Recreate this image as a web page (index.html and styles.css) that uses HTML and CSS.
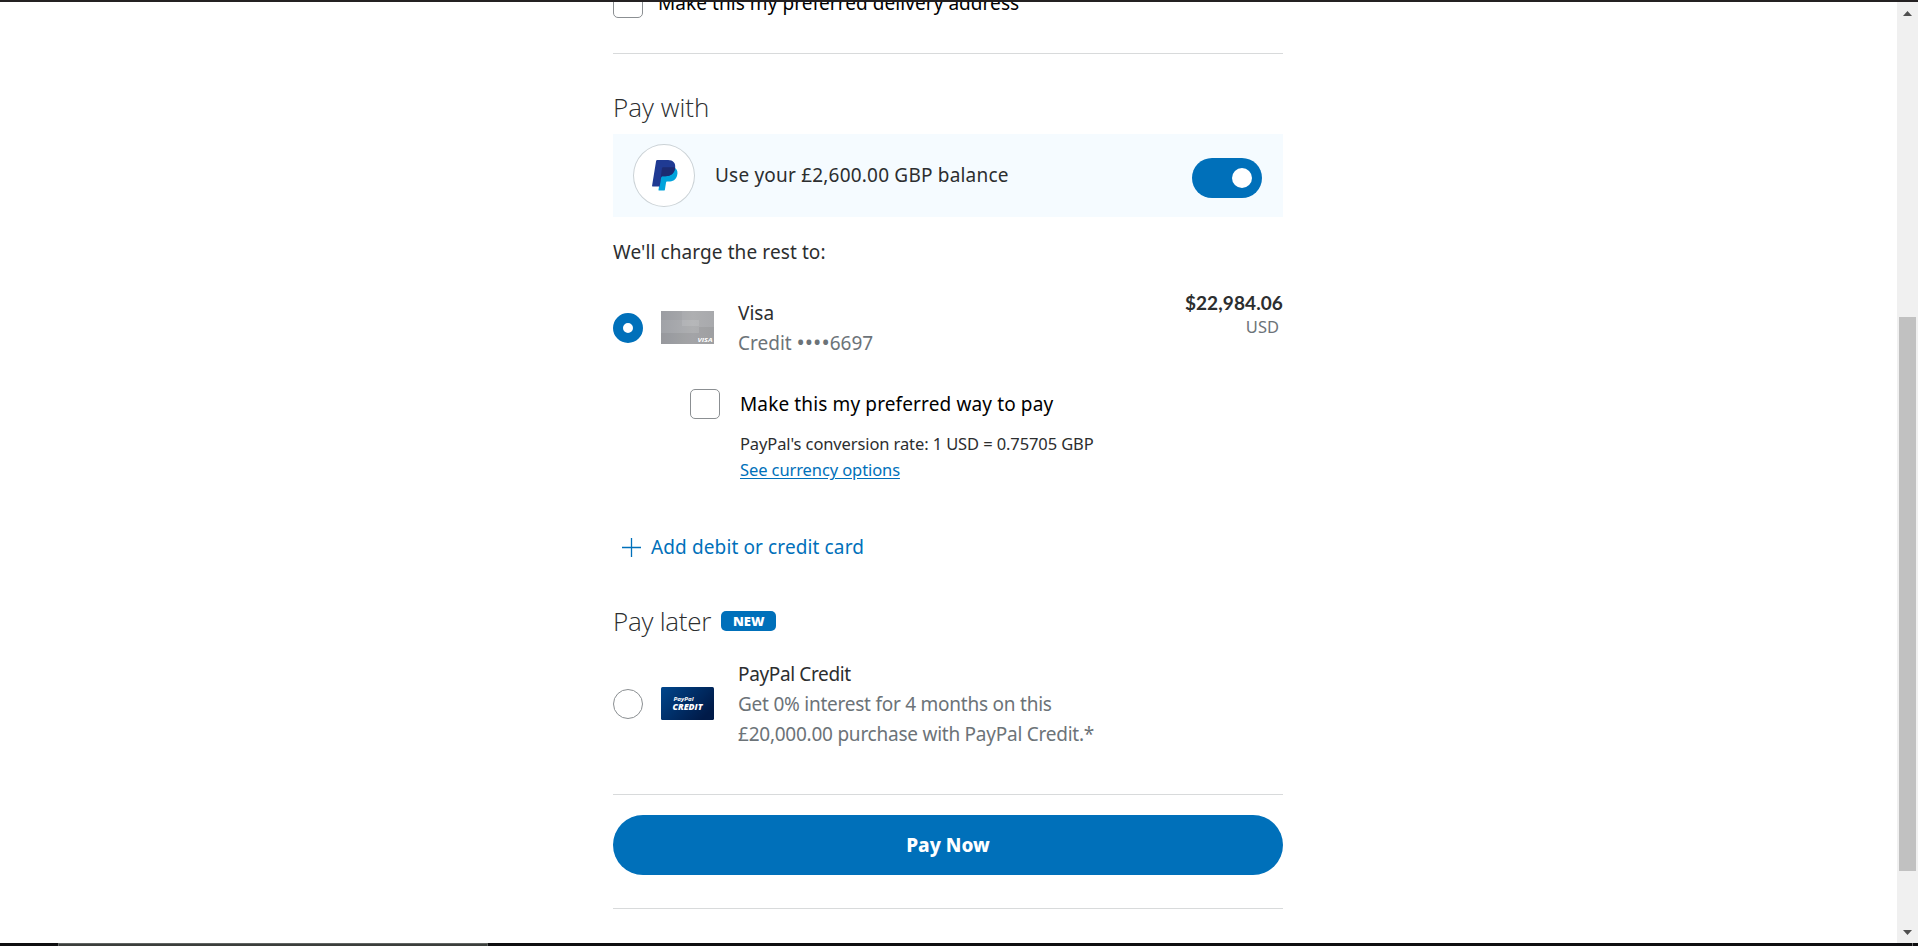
FILE: index.html
```html
<!DOCTYPE html>
<html lang="en">
<head>
<meta charset="utf-8">
<title>Pay with PayPal</title>
<link rel="stylesheet" href="styles.css">
</head>
<body>
<div class="frame-top"></div>
<div class="viewport">
  <main class="content">
    <div class="column">
      <label class="address-row"><span class="checkbox"></span><span class="t-address">Make this my preferred delivery address</span></label>
      <hr class="rule rule-first">
      <h2 class="heading heading-with"><span class="t-with">Pay with</span></h2>
      <section class="balance">
        <span class="balance-logo">
          <svg width="26" height="31" viewBox="0 0 26 31"><path fill="#00a3dc" d="M23.4 8.2c2.2 1.7 2.5 4.200 1.700 7.400-1.100 4.400-4.200 6-8.600 6h-1.200c-.7 0-1.200.4-1.300 1.100l-1.100 7c-.1.600-.5.900-1.100.9H7.300c-.6 0-.9-.3-.8-.9L10 8.200z"/><path fill="#1f3a93" d="M5.400 0h10.700c4.900 0 7.900 3.200 7 8-1 5.600-4.500 8.200-9.700 8.200h-2.600c-.9 0-1.500.5-1.700 1.400l-1.400 9H.9c-.6 0-.9-.4-.8-1L4.100 1.100C4.200.4 4.700 0 5.400 0z"/><path fill="#1c2b72" d="M11 7.200h11c.5 0 .9.200 1.300.5-.9 5.700-4.500 8.500-9.900 8.500h-2.600c-.9 0-1.500.5-1.700 1.300L7.900 24 10 8.100c.1-.6.400-.9 1-.9z"/></svg>
        </span>
        <span class="balance-text t-balance">Use your £2,600.00 GBP balance</span>
        <span class="toggle"><span class="knob"></span></span>
      </section>
      <p class="rest"><span class="t-rest">We'll charge the rest to:</span></p>
      <section class="option visa">
        <span class="radio selected"></span>
        <svg class="card" width="53" height="33" viewBox="0 0 53 33">
          <defs><linearGradient id="silver" x1="0" y1="0" x2="1" y2="0"><stop offset="0" stop-color="#9b9da2"/><stop offset=".6" stop-color="#a9aaad"/><stop offset="1" stop-color="#a3a4a7"/></linearGradient></defs>
          <path fill="url(#silver)" d="M0 0h53v33H0z"/><path fill="#fff" fill-opacity=".06" d="M21 0h32v16H21zM0 9h38v13H0z"/><path fill="#fff" fill-opacity=".1" d="M21 9h17v6H21z"/><path fill="#777" fill-opacity=".1" d="M0 22h53v11H0zM38 16h15v6H38z"/>
          <text class="visa-mark" x="36.500" y="31" textLength="15" lengthAdjust="spacingAndGlyphs">VISA</text>
        </svg>
        <div class="info"><div><span class="t-visa">Visa</span></div><div class="muted"><span class="t-num">Credit <span class="dots">••••</span>6697</span></div></div>
        <div class="amount"><div class="total"><span class="t-total">$22,984.06</span></div><div class="currency"><span class="t-usd">USD</span></div></div>
      </section>
      <label class="preferred"><span class="checkbox"></span><span class="t-pref">Make this my preferred way to pay</span></label>
      <div class="conversion">
        <div><span class="t-rate">PayPal's conversion rate: 1 USD = 0.75705 GBP</span></div>
        <div><a class="t-see">See currency options</a></div>
      </div>
      <a class="add"><svg width="19" height="19" viewBox="0 0 19 19"><path d="M9.500 0v19M0 9.500h19" stroke="#0070ba" stroke-width="1.300"/></svg><span class="t-add">Add debit or credit card</span></a>
      <h2 class="heading heading-later"><span class="t-later">Pay later</span><span class="badge"><span class="t-new">NEW</span></span></h2>
      <section class="option credit">
        <span class="radio"></span>
        <svg class="card" width="53" height="33" viewBox="0 0 53 33">
          <defs><linearGradient id="navy" x1="0" y1="0" x2="1" y2=".6"><stop offset="0" stop-color="#00468c"/><stop offset="1" stop-color="#001a48"/></linearGradient></defs>
          <rect width="53" height="33" rx="1.500" fill="url(#navy)"/>
          <text class="credit-small" x="12.500" y="14" textLength="20" lengthAdjust="spacingAndGlyphs">PayPal</text>
          <text class="credit-large" x="11.500" y="23" textLength="30" lengthAdjust="spacingAndGlyphs">CREDIT</text>
        </svg>
        <div class="info"><div><span class="t-ppc">PayPal Credit</span></div><div class="muted"><span class="t-get">Get 0% interest for 4 months on this</span></div><div class="muted"><span class="t-purchase">£20,000.00 purchase with PayPal Credit.*</span></div></div>
      </section>
      <hr class="rule rule-second">
      <button class="pay"><span class="t-pay">Pay Now</span></button>
      <hr class="rule rule-last">
    </div>
  </main>
  <aside class="scrollbar">
    <svg class="arrow" width="9" height="5" viewBox="0 0 9 5"><path fill="#505050" d="M4.500 0 9 5H0z"/></svg>
    <span class="thumb"></span>
    <svg class="arrow" width="9" height="5" viewBox="0 0 9 5"><path fill="#505050" d="M4.500 5 0 0h9z"/></svg>
  </aside>
</div>
<footer class="frame-bottom"><span class="frame-window"></span><span class="frame-tick"></span></footer>
</body>
</html>
```
FILE: styles.css
```css
* { box-sizing: border-box; }
body { margin: 0; height: 946px; overflow: hidden; display: flex; flex-direction: column; background: #fff; color: #2c2e2f; font: 19px/30px "Noto Sans", "Open Sans", sans-serif; white-space: nowrap; }
.frame-top { height: 2px; flex: none; background: #242122; }
.viewport { display: flex; height: 941px; overflow: hidden; }
.content { flex: 1; padding-right: 1px; }
.column { width: 670px; margin: 0 auto; display: flex; flex-direction: column; }
.rule { width: 100%; height: 1px; margin: 0; border: 0; background: #d8dadb; }
.checkbox { width: 30px; height: 30px; flex: none; border: 1px solid #8b8f92; border-radius: 5px; background: #fff; }
.address-row { display: flex; gap: 15px; margin-top: -14px; color: #000; }
.rule-first { margin-top: 35px; }
.heading { margin: 0; font: 300 26px/36px "Open Sans", sans-serif; display: flex; }
.heading-with { margin-top: 35px; }
.balance { display: flex; align-items: flex-start; height: 83px; margin-top: 9px; padding: 0 21px 0 20px; background: #f5fbff; }
.balance-logo { width: 62px; height: 63px; margin-top: 10px; padding-left: 2px; border: 1px solid #cbd2d6; border-radius: 50%; background: #fff; display: flex; justify-content: center; align-items: center; }
.balance-text { margin: 26px 0 0 20px; }
.toggle { width: 70px; height: 40px; margin: 24px 0 0 auto; padding: 10px; border-radius: 20px; background: #0070ba; display: flex; justify-content: flex-end; }
.knob { width: 20px; height: 20px; border-radius: 50%; background: #fff; }
.rest { margin: 20px 0 0; }
.option { display: flex; }
.visa { height: 70px; margin-top: 21px; }
.radio { width: 30px; height: 30px; flex: none; border: 1px solid #8b8f92; border-radius: 50%; background: #fff; }
.radio.selected { border: 10px solid #0070ba; }
.visa .radio { margin-top: 25px; }
.card { flex: none; margin: 23px 0 0 18px; }
.visa-mark { font: italic 700 6px "Open Sans", sans-serif; fill: #fff; }
.info { margin-left: 24px; }
.visa .info { padding-top: 10px; }
.muted, .currency { color: #6c7378; }
.dots { font-size: 22px; line-height: 1; }
.amount { margin-left: auto; text-align: right; }
.total { font: 700 19px/30px Lato, sans-serif; }
.currency { font-size: 16.500px; line-height: 24px; margin-top: -3px; padding-right: 4px; }
.preferred { display: flex; gap: 20px; margin: 31px 0 0 77px; color: #000; }
.conversion { margin: 12px 0 0 127px; font-size: 16.500px; line-height: 26px; }
.conversion a { color: #0070ba; text-decoration: underline; text-underline-offset: 2px; }
.add { display: flex; align-items: center; gap: 10px; height: 30px; margin: 49px 0 0 9px; color: #0070ba; }
.heading-later { margin-top: 41px; align-items: center; }
.badge { width: 55px; height: 20px; margin-left: 10px; border-radius: 5px; background: #0070ba; color: #fff; font: 800 13px/20px "Open Sans", sans-serif; text-align: center; }
.credit { height: 90px; margin-top: 20px; }
.credit .radio { margin-top: 30px; }
.credit .card { margin-top: 28px; }
.credit-small { font: italic 700 6px "Open Sans", sans-serif; fill: #fff; }
.credit-large { font: italic 800 8.500px "Open Sans", sans-serif; fill: #fff; }
.rule-second { margin-top: 45px; }
.pay { height: 60px; margin: 20px 0 0; padding: 0; border: 0; border-radius: 30px; background: #0070ba; color: #fff; font: 800 19px/30px "Noto Sans", sans-serif; }
.rule-last { margin-top: 33px; }
.t-address { letter-spacing: .06px; }
.t-balance { letter-spacing: .2px; }
.t-rest { letter-spacing: .1px; }
.t-total { letter-spacing: .1px; }
.t-pref { letter-spacing: .13px; }
.t-rate { letter-spacing: -.11px; }
.t-see { letter-spacing: -.1px; }
.t-add { letter-spacing: .12px; }
.t-later { letter-spacing: -.25px; }
.t-ppc { letter-spacing: -.36px; }
.t-get, .t-purchase { letter-spacing: -.24px; }
.scrollbar { width: 21px; background: #f0f0f0; display: flex; flex-direction: column; align-items: center; padding: 9px 0 8px; }
.thumb { width: 17px; height: 554px; margin: 301px 0 59px; background: #c1c1c1; }
.arrow { display: block; flex: none; }
.frame-bottom { height: 3px; flex: none; display: flex; background: #0e0e10; }
.frame-window { width: 430px; margin-left: 58px; border: 1px solid #5f6361; border-bottom: 0; background: #3b3e3c; }
.frame-tick { width: 1px; margin-left: auto; margin-right: 5px; background: #6d6d6d; }
```
